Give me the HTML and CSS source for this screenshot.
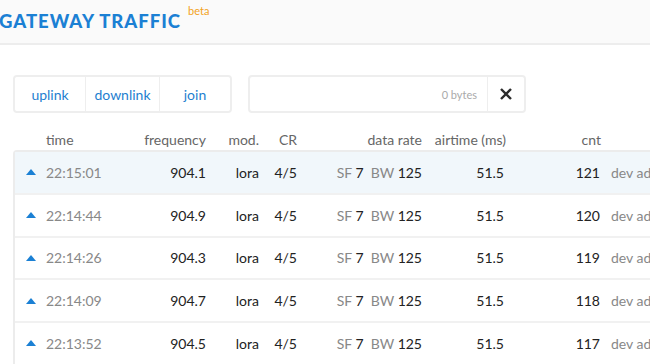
FILE: index.html
```html
<!DOCTYPE html>
<html>
<head>
<meta charset="utf-8">
<link rel="stylesheet" href="styles.css">
</head>
<body>
<header class="topbar">
  <h1 class="title">GATEWAY TRAFFIC</h1>
  <span class="beta">beta</span>
</header>
<section class="controls">
  <div class="tabs">
    <button class="tab tab-up">uplink</button>
    <button class="tab tab-down">downlink</button>
    <button class="tab tab-join">join</button>
  </div>
  <div class="filter">
    <div class="filter-field"><span class="bytes">0 bytes</span></div>
    <button class="clear">
      <svg width="14" height="14" viewBox="0 0 14 14"><path d="M2 2 L12 12 M12 2 L2 12" stroke="#2b2b2b" stroke-width="2.4" stroke-linecap="butt" fill="none"/></svg>
    </button>
  </div>
</section>
<section class="traffic">
  <div class="head">
    <span class="c-arrow"></span>
    <span class="c-time">time</span>
    <span class="c-freq">frequency</span>
    <span class="c-mod">mod.</span>
    <span class="c-cr">CR</span>
    <span class="c-rate">data rate</span>
    <span class="c-air">airtime (ms)</span>
    <span class="c-cnt">cnt</span>
  </div>
  <div class="table">
    <div class="row active">
      <span class="c-arrow"><i class="up"></i></span>
      <span class="c-time">22:15:01</span>
      <span class="c-freq">904.1</span>
      <span class="c-mod">lora</span>
      <span class="c-cr">4/5</span>
      <span class="c-rate"><em>SF</em> 7 &nbsp;<em>BW</em> 125</span>
      <span class="c-air">51.5</span>
      <span class="c-cnt">121</span>
      <span class="c-dev">dev addr</span>
    </div>
    <div class="row">
      <span class="c-arrow"><i class="up"></i></span>
      <span class="c-time">22:14:44</span>
      <span class="c-freq">904.9</span>
      <span class="c-mod">lora</span>
      <span class="c-cr">4/5</span>
      <span class="c-rate"><em>SF</em> 7 &nbsp;<em>BW</em> 125</span>
      <span class="c-air">51.5</span>
      <span class="c-cnt">120</span>
      <span class="c-dev">dev addr</span>
    </div>
    <div class="row">
      <span class="c-arrow"><i class="up"></i></span>
      <span class="c-time">22:14:26</span>
      <span class="c-freq">904.3</span>
      <span class="c-mod">lora</span>
      <span class="c-cr">4/5</span>
      <span class="c-rate"><em>SF</em> 7 &nbsp;<em>BW</em> 125</span>
      <span class="c-air">51.5</span>
      <span class="c-cnt">119</span>
      <span class="c-dev">dev addr</span>
    </div>
    <div class="row">
      <span class="c-arrow"><i class="up"></i></span>
      <span class="c-time">22:14:09</span>
      <span class="c-freq">904.7</span>
      <span class="c-mod">lora</span>
      <span class="c-cr">4/5</span>
      <span class="c-rate"><em>SF</em> 7 &nbsp;<em>BW</em> 125</span>
      <span class="c-air">51.5</span>
      <span class="c-cnt">118</span>
      <span class="c-dev">dev addr</span>
    </div>
    <div class="row">
      <span class="c-arrow"><i class="up"></i></span>
      <span class="c-time">22:13:52</span>
      <span class="c-freq">904.5</span>
      <span class="c-mod">lora</span>
      <span class="c-cr">4/5</span>
      <span class="c-rate"><em>SF</em> 7 &nbsp;<em>BW</em> 125</span>
      <span class="c-air">51.5</span>
      <span class="c-cnt">117</span>
      <span class="c-dev">dev addr</span>
    </div>
  </div>
</section>
</body>
</html>
```

FILE: styles.css
```css
html, body {
  margin: 0;
  padding: 0;
  background: #fff;
  overflow: hidden;
}
body {
  width: 650px;
  height: 364px;
  font-family: Lato, "Open Sans", sans-serif;
  color: #222;
}
.topbar {
  height: 43px;
  background: #fafafa;
  border-bottom: 2px solid #ededed;
  display: flex;
  align-items: flex-start;
  box-sizing: content-box;
}
.title {
  margin: 11px 0 0 -1px;
  font-size: 18.5px;
  font-weight: 900;
  letter-spacing: 1px;
  color: #1b80d4;
  line-height: 20px;
}
.beta {
  margin: 4px 0 0 7px;
  font-size: 11px;
  color: #f2a21c;
  line-height: 14px;
}
.controls {
  display: flex;
  margin: 30px 0 0 13px;
  gap: 16px;
}
.tabs {
  display: flex;
  height: 38px;
  border: 2px solid #eeeeee;
  border-radius: 4px;
  box-sizing: border-box;
  width: 219px;
}
.tab {
  border: 0;
  background: #fff;
  font-family: Lato, sans-serif;
  font-size: 14px;
  color: #1f7fd0;
  padding: 0;
  height: 34px;
  border-radius: 3px;
}
.tab-up { width: 71px; border-right: 1px solid #eeeeee; border-radius: 3px 0 0 3px; }
.tab-down { width: 74px; border-right: 1px solid #eeeeee; border-radius: 0; }
.tab-join { width: 70px; }
.filter {
  display: flex;
  height: 38px;
  width: 278px;
  border: 2px solid #eeeeee;
  border-radius: 4px;
  box-sizing: border-box;
}
.filter-field {
  flex: 1;
  display: flex;
  align-items: center;
  justify-content: flex-end;
  padding-right: 10px;
  border-right: 1px solid #eeeeee;
}
.bytes {
  font-size: 11px;
  color: #aaaaaa;
}
.clear {
  width: 36px;
  border: 0;
  background: #fff;
  padding: 0;
  display: flex;
  align-items: center;
  justify-content: center;
  border-radius: 0 3px 3px 0;
}
.traffic {
  margin: 18px 0 0 13px;
}
.head {
  display: flex;
  height: 19px;
  align-items: flex-start;
  font-size: 14px;
  line-height: 17px;
  color: #666;
}
.table {
  border-left: 2px solid #ececec;
  border-top: 2px solid #ececec;
  border-top-left-radius: 4px;
  width: 700px;
}
.head .c-arrow { width: 33px; }
.row {
  display: flex;
  align-items: center;
  height: 40.75px;
  border-bottom: 2px solid #f1f1f1;
  font-size: 14px;
  color: #222;
}
.row.active { background: #f1f7fb; }
.row .c-arrow { width: 31px; }
.c-arrow { display: flex; justify-content: center; }
.c-time { width: 74px; color: #888; }
.head .c-time { color: #666; }
.c-freq { width: 86px; text-align: right; }
.c-mod { width: 53px; text-align: right; }
.c-cr { width: 38px; text-align: right; }
.c-rate { width: 125px; text-align: right; }
.c-rate em { font-style: normal; color: #888; }
.c-air { width: 84px; text-align: right; }
.row .c-air { padding-right: 2px; width: 82px; }
.c-cnt { width: 95px; text-align: right; }
.row .c-cnt { padding-right: 1px; width: 94px; }
.c-dev { margin-left: 10px; color: #888; white-space: nowrap; }
.up {
  display: block;
  width: 0;
  height: 0;
  border-left: 5.5px solid transparent;
  border-right: 5.5px solid transparent;
  border-bottom: 6px solid #1b80d4;
}
```
